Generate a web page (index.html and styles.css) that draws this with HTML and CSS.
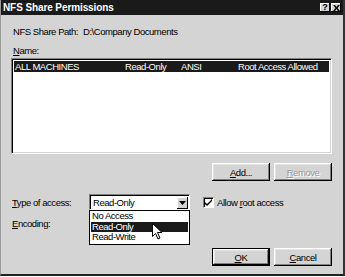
FILE: index.html
```html
<!DOCTYPE html>
<html lang="en">
<head>
    <meta charset="UTF-8">
    <title>NFS Share Permissions</title>
    <link rel="stylesheet" href="styles.css">
</head>
<body>
    <div class="dialog">
        <div class="titlebar">
            <span class="title">NFS Share Permissions</span>
            <div class="caption-buttons">
                <span class="cap-btn">?</span>
                <span class="cap-btn">
                    <svg width="7" height="6" viewBox="0 0 7 6"><path d="M0 0h2l1.5 2L5 0h2L4.5 3 7 6H5L3.5 4 2 6H0l2.5-3z" fill="#000"/></svg>
                </span>
            </div>
        </div>

        <div class="content">
            <div class="path-row">
                <span class="path-label">NFS Share Path:</span>
                <span>D:\Company Documents</span>
            </div>
            <div class="name-label"><u>N</u>ame:</div>

            <div class="listbox">
                <div class="list-row selected">
                    <span>ALL MACHINES</span>
                    <span>Read-Only</span>
                    <span>ANSI</span>
                    <span>Root Access Allowed</span>
                </div>
            </div>

            <div class="list-buttons">
                <button class="btn"><u>A</u>dd...</button>
                <button class="btn disabled"><u>R</u>emove</button>
            </div>

            <div class="option-row">
                <span class="option-label"><u>T</u>ype of access:</span>
                <div class="combo">
                    <span class="combo-value">Read-Only</span>
                    <span class="combo-arrow">
                        <svg width="7" height="4" viewBox="0 0 7 4"><path d="M0 0h7L3.5 4z" fill="#000"/></svg>
                    </span>
                    <div class="dropdown">
                        <div class="dropdown-item">No Access</div>
                        <div class="dropdown-item selected">Read-Only</div>
                        <div class="dropdown-item">Read-Write</div>
                    </div>
                    <svg class="cursor" width="11" height="17" viewBox="0 0 11 17">
                        <path d="M0.5 0.5V13.5L3.5 10.5L6 16L8 15L5.5 9.5H10L0.5 0.5Z" fill="#fff" stroke="#000" stroke-width="1"/>
                    </svg>
                </div>
                <label class="check">
                    <span class="check-box">
                        <svg width="7" height="7" viewBox="0 0 7 7"><path d="M0 3l2 2 5-5v2L2 7 0 5z" fill="#000"/></svg>
                    </span>
                    <span>Allow <u>r</u>oot access</span>
                </label>
            </div>

            <div class="option-row second">
                <span class="option-label"><u>E</u>ncoding:</span>
            </div>

            <div class="footer">
                <button class="btn default"><u>O</u>K</button>
                <button class="btn"><u>C</u>ancel</button>
            </div>
        </div>
    </div>
</body>
</html>
```

FILE: styles.css
```css
body {
    margin: 0;
    background: #fff;
    font-family: "Liberation Sans", Arial, sans-serif;
    font-size: 9.5px;
    letter-spacing: -0.45px;
    color: #000;
}
.dialog {
    width: 345px;
    height: 276px;
    box-sizing: border-box;
    background: #d4d4d4;
    border-left: 1px solid #999;
    border-right: 2px solid #333;
    border-bottom: 2px solid #222;
    display: flex;
    flex-direction: column;
}
.titlebar {
    height: 15px;
    background: #1a1a1a;
    display: flex;
    align-items: center;
    justify-content: space-between;
    padding: 0 2px 0 2px;
}
.title {
    color: #fff;
    font-weight: bold;
    font-size: 10px;
    letter-spacing: -0.1px;
}
.caption-buttons {
    display: flex;
    gap: 1px;
}
.cap-btn {
    width: 10px;
    height: 9px;
    background: #d4d4d4;
    box-shadow: inset -1px -1px #000, inset 1px 1px #fff;
    display: flex;
    align-items: center;
    justify-content: center;
    font-weight: bold;
    font-size: 9px;
    line-height: 9px;
    letter-spacing: 0;
}
.content {
    padding: 0 11px 0 10px;
    display: flex;
    flex-direction: column;
}
.path-row {
    margin-top: 10px;
    line-height: 13px;
    display: flex;
    padding-left: 2px;
}
.path-label {
    width: 70px;
}
.name-label {
    margin-top: 6px;
    line-height: 13px;
    padding-left: 2px;
}
.listbox {
    margin-top: 1px;
    height: 96px;
    box-sizing: border-box;
    background: #fff;
    border: 1px solid;
    border-color: #808080 #fff #fff #808080;
    box-shadow: inset 1px 1px #000, inset -1px -1px #d4d4d4;
    padding: 2px 2px;
}
.list-row {
    display: grid;
    grid-template-columns: 110px 56px 57px 1fr;
    height: 11px;
    line-height: 11px;
    padding-left: 1px;
    white-space: nowrap;
}
.list-row.selected {
    background: #1a1a1a;
    color: #fff;
}
.list-buttons {
    margin-top: 9px;
    display: flex;
    justify-content: flex-end;
    gap: 4px;
}
.btn {
    width: 58px;
    height: 18px;
    padding: 0;
    border: none;
    background: #d4d4d4;
    font-family: inherit;
    font-size: 9.5px;
    letter-spacing: -0.45px;
    color: #000;
    box-shadow: inset -1px -1px #000, inset 1px 1px #fff, inset -2px -2px #808080, inset 2px 2px #e4e4e4;
}
.btn.disabled {
    color: #9a9a9a;
    text-shadow: 1px 1px #fff;
}
.btn.default {
    border: 1px solid #000;
}
.option-row {
    margin-top: 13px;
    height: 16px;
    display: flex;
    align-items: center;
    padding-left: 1px;
}
.option-row.second {
    margin-top: 6px;
    height: 14px;
}
.option-label {
    width: 77px;
}
.combo {
    position: relative;
    width: 101px;
    height: 16px;
    box-sizing: border-box;
    background: #fff;
    border: 1px solid;
    border-color: #808080 #fff #fff #808080;
    box-shadow: inset 1px 1px #000;
    display: flex;
    align-items: center;
    justify-content: space-between;
    padding: 1px 1px 0 3px;
}
.combo-arrow {
    width: 11px;
    height: 12px;
    background: #d4d4d4;
    box-shadow: inset -1px -1px #000, inset 1px 1px #fff;
    display: flex;
    align-items: center;
    justify-content: center;
}
.dropdown {
    position: absolute;
    left: -1px;
    top: 15px;
    width: 101px;
    box-sizing: border-box;
    background: #fff;
    border: 1px solid #000;
    padding: 0 1px 1px;
    display: flex;
    flex-direction: column;
}
.dropdown-item {
    height: 10.5px;
    line-height: 10.5px;
    padding-left: 1px;
}
.dropdown-item.selected {
    background: #1a1a1a;
    color: #fff;
}
.cursor {
    position: absolute;
    left: 62px;
    top: 28px;
}
.check {
    margin-left: 13px;
    display: flex;
    align-items: center;
    gap: 3px;
}
.check-box {
    width: 11px;
    height: 11px;
    box-sizing: border-box;
    background: #fff;
    border: 1px solid;
    border-color: #808080 #fff #fff #808080;
    box-shadow: inset 1px 1px #000;
    display: flex;
    align-items: center;
    justify-content: center;
}
.footer {
    margin-top: 18px;
    display: flex;
    justify-content: flex-end;
    gap: 4px;
}
```
